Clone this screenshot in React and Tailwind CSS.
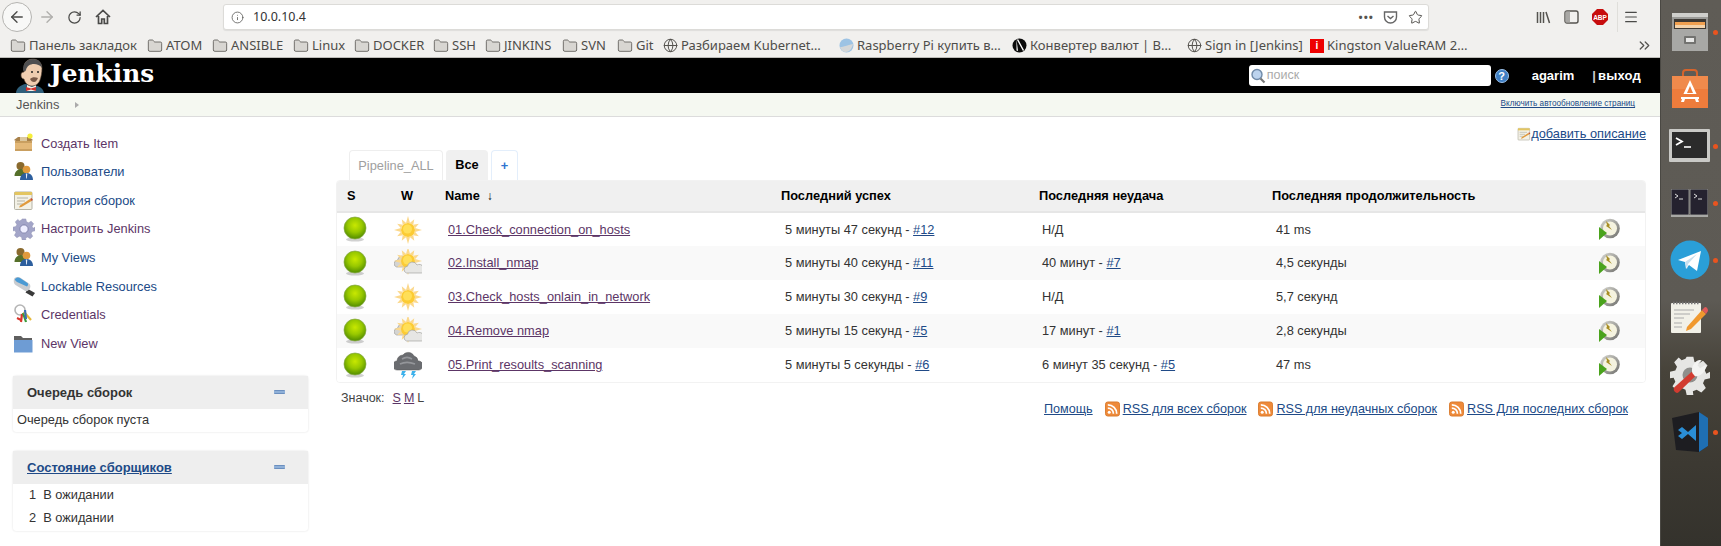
import { ArrowLeft, ArrowRight, RotateCw, Info, Star, ChevronsRight, Menu, Globe, Folder } from 'lucide-react';

const bookmarks = [
  { label: 'Панель закладок', w: 'w-[137px]' },
  { label: 'ATOM', w: 'w-[65px]' },
  { label: 'ANSIBLE', w: 'w-[81px]' },
  { label: 'Linux', w: 'w-[61px]' },
  { label: 'DOCKER', w: 'w-[79px]' },
  { label: 'SSH', w: 'w-[52px]' },
  { label: 'JINKINS', w: 'w-[77px]' },
  { label: 'SVN', w: 'w-[55px]' },
  { label: 'Git', w: 'w-[46px]' },
  { label: 'Разбираем Kubernet…', w: 'w-[176px]', icon: 'globe' },
  { label: 'Raspberry Pi купить в…', w: 'w-[173px]', icon: 'rasp' },
  { label: 'Конвертер валют | В…', w: 'w-[175px]', icon: 'n' },
  { label: 'Sign in [Jenkins]', w: 'w-[123px]', icon: 'globe' },
  { label: 'Kingston ValueRAM 2…', w: 'w-[170px]', icon: 'king' },
];

const sideItems = [
  { label: 'Создать Item', icon: BoxIcon, visited: true },
  { label: 'Пользователи', icon: UsersIcon },
  { label: 'История сборок', icon: NotepadIcon },
  { label: 'Настроить Jenkins', icon: GearIcon, visited: true },
  { label: 'My Views', icon: UsersIcon },
  { label: 'Lockable Resources', icon: UsbIcon },
  { label: 'Credentials', icon: KeysIcon, visited: true },
  { label: 'New View', icon: FolderIcon, visited: true },
];

const jobs = [
  { name: '01.Check_connection_on_hosts', w: 'sun', ok: '5 минуты 47 секунд', okN: '#12', fail: 'Н/Д', dur: '41 ms' },
  { name: '02.Install_nmap', w: 'cloud', ok: '5 минуты 40 секунд', okN: '#11', fail: '40 минут', failN: '#7', dur: '4,5 секунды' },
  { name: '03.Check_hosts_onlain_in_network', w: 'sun', ok: '5 минуты 30 секунд', okN: '#9', fail: 'Н/Д', dur: '5,7 секунд' },
  { name: '04.Remove nmap', w: 'cloud', ok: '5 минуты 15 секунд', okN: '#5', fail: '17 минут', failN: '#1', dur: '2,8 секунды' },
  { name: '05.Print_resoults_scanning', w: 'storm', ok: '5 минуты 5 секунды', okN: '#6', fail: '6 минут 35 секунд', failN: '#5', dur: '47 ms' },
];

const rssLinks = ['RSS для всех сборок', 'RSS для неудачных сборок', 'RSS Для последних сборок'];

function BoxIcon() {
  return (
    <svg width="21" height="21" viewBox="0 0 21 21">
      <path d="M1 7l4-3h11l4 3-2 1H3z" fill="#a8814a" />
      <path d="M2 8h17v10H2z" fill="#e3b878" />
      <path d="M2 8h17v2H2z" fill="#c99f60" />
      <path d="M7 4h7v4H7z" fill="#dcc8a0" />
      <path d="M2 16h17v2H2z" fill="#c99f60" />
      <circle cx="17" cy="3" r="2.600" fill="#f6ee3a" />
    </svg>
  );
}

function UsersIcon() {
  return (
    <svg width="21" height="21" viewBox="0 0 21 21">
      <circle cx="7.500" cy="5" r="4" fill="#8a6a2e" />
      <path d="M1.500 15c0-4 3-7 6.500-7s5 3 5 7z" fill="#55702a" />
      <circle cx="13.500" cy="8.500" r="3.800" fill="#e09a3c" />
      <path d="M7 19c0-4.500 3-7 6.500-7s6.500 2.500 6.500 7z" fill="#2d5f9e" />
      <path d="M12.800 12.500h1.500l-.4 5h-.7z" fill="#e8eef6" />
    </svg>
  );
}

function NotepadIcon({ size = 21 }) {
  return (
    <svg width={size} height={size} viewBox="0 0 21 21">
      <rect x="1.500" y="2" width="17.500" height="17.500" rx="1" fill="#f3f1e6" stroke="#b5b3a5" />
      <rect x="1.500" y="2" width="17.500" height="3" fill="#e3c560" />
      <path d="M4 8h11M4 11h8M4 14h6" stroke="#b5b3a5" strokeWidth="1" />
      <path d="M7 15.500l10-6.500 1.500 2-10 6-2.500.500z" fill="#e09a3c" />
      <path d="M17 9l1.500-1 1.500 2-1.500 1z" fill="#c8502e" />
    </svg>
  );
}

function GearIcon() {
  return (
    <svg width="22" height="22" viewBox="0 0 24 24">
      <path
        d="M10 1h4l.7 3.200 2.300 1 2.800-1.700 2.700 2.800-1.700 2.700 1 2.300L24 10v4l-3.200.7-1 2.300 1.700 2.800-2.700 2.700-2.800-1.700-2.300 1L14 24h-4l-.7-3.200-2.300-1-2.800 1.700-2.700-2.700 1.700-2.800-1-2.300L0 14v-4l3.200-.7 1-2.300-1.700-2.700 2.700-2.800L7 3.200l2.300-1z"
        fill="#a3a5c8"
        stroke="#8c8eb3"
        strokeWidth=".5"
      />
      <circle cx="12" cy="12" r="4.500" fill="#eef" stroke="#7d7fa8" />
    </svg>
  );
}

function UsbIcon() {
  return (
    <svg width="23" height="21" viewBox="0 0 23 21">
      <path d="M15 13l7 4-2.500 3.500-7-4z" fill="#3a3a3a" />
      <path d="M1 3c1-2 4-2.500 6-1.500l9 6c2 1.500 1.500 4 .500 5.500s-3 3-5 1.500L2.500 9C1 8 .3 5 1 3z" fill="#c9ccd0" />
      <path d="M2 3c1-1.500 3.500-2 5-1l7.500 5c1 1 .5 2.500-.5 3.500L4 6C2.800 5.200 1.500 4 2 3z" fill="#4a9ad4" />
    </svg>
  );
}

function KeysIcon() {
  return (
    <svg width="21" height="22" viewBox="0 0 21 22">
      <circle cx="7" cy="6" r="5" fill="none" stroke="#b5b5b5" strokeWidth="1.600" />
      <path d="M9 10l-1 8" stroke="#d9352b" strokeWidth="2.200" />
      <path d="M10 9l3 9" stroke="#3a9a3a" strokeWidth="2.200" />
      <path d="M11 8l7 8" stroke="#e6b93a" strokeWidth="2.200" />
      <path d="M12 6l1 9" stroke="#3a6fb5" strokeWidth="2.200" />
      <path d="M4 14l4 2" stroke="#d9352b" strokeWidth="2" />
    </svg>
  );
}

function FolderIcon() {
  return (
    <svg width="21" height="21" viewBox="0 0 21 21">
      <path d="M1 3h7l2 2h9v14H1z" fill="#5f5f5f" />
      <path d="M1 7h18.500v12.500H1z" fill="#6e9cd4" />
    </svg>
  );
}

function Ball() {
  return (
    <svg width="24" height="27" viewBox="0 0 24 27" className="block">
      <defs>
        <radialGradient id="ballFill" cx="50%" cy="38%" r="58%">
          <stop offset="0%" stopColor="#c8e800" />
          <stop offset="55%" stopColor="#98c800" />
          <stop offset="100%" stopColor="#5a9400" />
        </radialGradient>
      </defs>
      <ellipse cx="12" cy="23.500" rx="9" ry="2" fill="#000" opacity=".18" />
      <circle cx="12" cy="12" r="11" fill="url(#ballFill)" stroke="#86a848" strokeWidth=".7" />
    </svg>
  );
}

function Sun({ r = 7, cx = 14, cy = 14 }) {
  const rays = [0, 30, 60, 90, 120, 150, 180, 210, 240, 270, 300, 330];
  return (
    <g>
      {rays.map((a, i) => (
        <path
          key={a}
          transform={`rotate(${a} ${cx} ${cy})`}
          d={`M${cx - 2} ${cy - r}L${cx} ${cy - r - (i % 3 === 0 ? 7 : 5.500)}L${cx + 2} ${cy - r}z`}
          fill="#fbd88c"
        />
      ))}
      <circle cx={cx} cy={cy} r={r} fill="#fccb34" />
      <circle cx={cx - 0.500} cy={cy - 1} r={r - 2.500} fill="#ffdf58" />
    </g>
  );
}

function Cloud({ fill, x = 0, y = 0 }) {
  return (
    <path
      transform={`translate(${x} ${y})`}
      d="M3 12a3.500 3.500 0 0 1 1-6.800A5 5 0 0 1 13.500 4 4 4 0 0 1 18 12z"
      fill={fill}
      stroke="#989896"
      strokeWidth=".6"
    />
  );
}

function Weather({ kind }) {
  return (
    <svg width="28" height="28" viewBox="0 0 28 28" className="block">
      {kind === 'sun' && <Sun />}
      {kind === 'cloud' && (
        <g>
          <Cloud fill="#d4d4d2" x={-0.500} y={6} />
          <Sun r={7} cx={14} cy={12} />
          <Cloud fill="#e6e6e4" x={9.500} y={12} />
        </g>
      )}
      {kind === 'storm' && (
        <g>
          <path d="M3 19a4.500 4.500 0 0 1 0-9A6 6 0 0 1 9 4a6.500 6.500 0 0 1 11 1 5.500 5.500 0 0 1 4 5 4.500 4.500 0 0 1 1 9z" fill="#6a6c70" stroke="#555" strokeWidth=".5" />
          <path d="M8 8c3-2 7-2 10 0M6 13c4-2 10-2 15 0" stroke="#94969a" strokeWidth="1.600" fill="none" />
          <path d="M8 20h4l-2 3h2l-4 5 1-4H7z" fill="#3eb2ec" />
          <path d="M18 20h4l-2 3h2l-4 5 1-4h-2z" fill="#3eb2ec" />
        </g>
      )}
    </svg>
  );
}

function BuildIcon() {
  return (
    <svg width="22" height="23" viewBox="0 0 22 23" className="block">
      <defs>
        <linearGradient id="clockRim" x1="0" y1="0" x2="1" y2="1">
          <stop offset="0%" stopColor="#d8d8d2" />
          <stop offset="100%" stopColor="#6f6f6c" />
        </linearGradient>
      </defs>
      <circle cx="12" cy="10.500" r="9.800" fill="url(#clockRim)" />
      <circle cx="12" cy="10.500" r="7" fill="#f5f3df" />
      <path d="M8 3l4 4-1 1 3 4-6-4 1-1z" fill="#a88e24" />
      <path d="M1 9l8 6-8 7z" fill="#4aa31c" />
    </svg>
  );
}

function RssIcon() {
  return (
    <svg width="15" height="16" viewBox="0 0 16 16" className="shrink-0">
      <rect x=".5" y=".5" width="15" height="15" rx="2.500" fill="#ee8a3a" stroke="#d97a2c" />
      <circle cx="4.500" cy="11.500" r="1.600" fill="#fff" />
      <path d="M3 7a6 6 0 0 1 6 6M3 3.500A9.500 9.500 0 0 1 12.500 13" stroke="#fff" strokeWidth="1.800" fill="none" />
    </svg>
  );
}

function JenkinsLogo() {
  return (
    <svg width="30" height="35" viewBox="0 0 30 35" className="block">
      <path d="M0 35c0-5 5-8 9-9l9 1c5 1 9 3 10 8z" fill="#2f5f7a" />
      <path d="M11 27l5 2 4-2v6h-9z" fill="#f3f1e8" />
      <path d="M10 29l5 1.500 5-1.500v4l-5-1.500-5 1.500z" fill="#d0312d" />
      <path d="M8 9c0-5 4-8 9-8s9 4 9 9-1 9-2 12-4 6-8 6-7-3-8-7c-2 0-3-2-3-4s1-3 3-3z" fill="#efcdb0" stroke="#5a4636" strokeWidth=".6" />
      <path d="M7 12c0-7 4-11 10-11s9 4 9 9c-2-3-5-4-8-4-4 0-7 2-8 6-1 2-2 2-3 0z" fill="#4e4e50" />
      <path d="M14 21c2-2 5-2 8-1-1 2-2 4-4 4-2 0-3-1-4-3z" fill="#7a5a48" />
      <circle cx="16" cy="14" r="1" fill="#222" />
      <circle cx="22" cy="14" r="1" fill="#222" />
    </svg>
  );
}

function BookmarkIcon({ kind }) {
  if (kind === 'globe') return <Globe size={15} strokeWidth={1.600} className="text-[#55534f] shrink-0" />;
  if (kind === 'rasp') {
    return (
      <svg width="15" height="15" viewBox="0 0 15 15" className="shrink-0">
        <circle cx="7.500" cy="7.500" r="7" fill="#9dc3e4" />
        <path d="M1 9c4 0 7-2 13-3-1 5-4 8-7 8S2 12 1 9z" fill="#d5d7d8" />
      </svg>
    );
  }
  if (kind === 'n') {
    return (
      <svg width="15" height="15" viewBox="0 0 15 15" className="shrink-0">
        <circle cx="7.500" cy="7.500" r="7" fill="#0b0b0b" />
        <path d="M4.500 1.500L6 13l-1.500-.500zM5 2l6 11 1-1L6 1z" fill="#fff" />
      </svg>
    );
  }
  if (kind === 'king') {
    return (
      <span className="w-[14px] h-[14px] shrink-0 bg-[#ee0000] text-white text-[10px] leading-[14px] font-bold text-center font-['Liberation_Sans',sans-serif]">i</span>
    );
  }
  return <Folder size={16} strokeWidth={1.200} className="text-[#55534f] fill-[#d8d6d2] shrink-0" />;
}

function Collapse() {
  return <span className="block w-[11px] h-[4px] bg-[#8fb0d8] border-y border-[#6b8fbf] rounded-[1px]" />;
}

function DockDot({ on }) {
  if (!on) return null;
  return <span className="absolute right-[3px] top-1/2 -mt-[2px] w-[5px] h-[5px] rounded-full bg-[#e9541f]" />;
}

const dock = [
  {
    on: true,
    svg: (
      <svg width="38" height="40" viewBox="0 0 38 40">
        <rect x="1" y="1" width="36" height="38" rx="2" fill="#9b9b98" />
        <rect x="1" y="1" width="36" height="4" fill="#cfcfcc" />
        <rect x="3" y="7" width="32" height="11" fill="#3c3833" />
        <path d="M4 10h30v3H4z" fill="#f0a050" />
        <path d="M4 13h30v3H4z" fill="#f4d3aa" />
        <rect x="1" y="17" width="36" height="22" fill="#a8a8a5" />
        <rect x="13" y="24" width="12" height="8" rx="1" fill="#737370" />
        <rect x="15" y="26" width="8" height="4" fill="#e8e8e6" />
      </svg>
    ),
  },
  {
    svg: (
      <svg width="38" height="40" viewBox="0 0 38 40">
        <path d="M12 7V4a3 3 0 0 1 3-3h8a3 3 0 0 1 3 3v3" stroke="#d5642c" strokeWidth="2" fill="none" />
        <path d="M1 7h36v32H1z" fill="#ee7c3c" />
        <path d="M1 7h36L37 20H1z" fill="#f08a4c" />
        <path d="M19 11l-7 15h14z" fill="#fff" />
        <path d="M19 17l-3 7h6z" fill="#ee7c3c" />
        <rect x="10" y="25" width="18" height="2" fill="#ee7c3c" />
        <path d="M10 28h18v2H10z" fill="#fff" />
        <path d="M11 30h3l-1 3h-3zM24 30h3l1 3h-3z" fill="#fff" />
      </svg>
    ),
  },
  {
    on: true,
    svg: (
      <svg width="41" height="33" viewBox="0 0 41 33">
        <rect x="0" y="0" width="41" height="33" rx="1" fill="#c9c9c6" />
        <rect x="3" y="3" width="35" height="26" fill="#2b2b2b" />
        <path d="M7 9l6 3.500-6 3.500" stroke="#fff" strokeWidth="1.800" fill="none" />
        <path d="M15 18h7" stroke="#fff" strokeWidth="1.600" />
      </svg>
    ),
  },
  {
    on: true,
    svg: (
      <svg width="37" height="28" viewBox="0 0 37 28">
        <rect x="0" y="0" width="18" height="26" rx="1" fill="#25222f" stroke="#8f8f8c" />
        <rect x="19" y="0" width="18" height="26" rx="1" fill="#25222f" stroke="#8f8f8c" />
        <rect x="0" y="26" width="37" height="2" fill="#a8a8a5" />
        <path d="M4 5l3 2-3 2M8 10h4M23 5l3 2-3 2M27 10h4" stroke="#ddd" strokeWidth="1" fill="none" />
      </svg>
    ),
  },
  {
    on: true,
    svg: (
      <svg width="40" height="40" viewBox="0 0 40 40">
        <circle cx="20" cy="20" r="19.500" fill="#2a9fd8" />
        <path d="M8 20l23-9-4 20-8-6-3 4-1-7z" fill="#fff" />
        <path d="M15 22l12-8-9 10-1 5z" fill="#c7dfee" />
      </svg>
    ),
  },
  {
    svg: (
      <svg width="40" height="33" viewBox="0 0 40 33">
        <rect x="1" y="2" width="30" height="30" rx="1" fill="#f2f1e8" />
        <path d="M3 2h27" stroke="#777" strokeWidth="2.400" strokeDasharray="1.500 1.500" />
        <path d="M4 9h20M4 13h16M4 17h10M4 22h8M4 26h8" stroke="#aaa" strokeWidth="1" />
        <path d="M17 26l15-17 4 4-15 15-5 2z" fill="#f0992e" />
        <path d="M32 9l3-3c2 0 3 2 3 4l-2 3z" fill="#e05a5a" />
      </svg>
    ),
  },
  {
    svg: (
      <svg width="40" height="40" viewBox="0 0 24 24">
        <path
          d="M10 1h4l.7 3.200 2.300 1 2.800-1.700 2.700 2.800-1.700 2.700 1 2.300L24 10v4l-3.200.7-1 2.300 1.700 2.800-2.700 2.700-2.800-1.700-2.300 1L14 24h-4l-.7-3.200-2.300-1-2.800 1.700-2.700-2.700 1.700-2.800-1-2.300L0 14v-4l3.200-.7 1-2.300-1.700-2.700 2.700-2.800L7 3.200l2.300-1z"
          fill="#e6e6e4"
        />
        <circle cx="12" cy="12" r="4.500" fill="#8f8f8c" />
        <path d="M2.500 19.500L13 10l2.500 2.500L5 22.500c-1.500 1-3.500-1.500-2.500-3z" fill="#d23b30" />
        <path d="M13.500 11c-1-3 .5-7 4-8l1.500.2-2.500 3 1.500 1.800 3.500-2.200c.3 4-3 7-6.500 7z" fill="#f4f4f2" />
      </svg>
    ),
  },
  {
    on: true,
    svg: (
      <svg width="36" height="40" viewBox="0 0 36 40">
        <path d="M0 6l27-6 9 8v26l-9 6L4 38z" fill="#1d1d21" />
        <path d="M27 0l9 6v28l-9 6z" fill="#1f6fb3" />
        <path d="M6 18l4-3 6 5 8-7v16l-8-7-6 5-4-3 4-3z" fill="#2a8ed6" />
      </svg>
    ),
  },
];

export default function App() {
  return (
    <div className="w-[1721px] h-[546px] overflow-hidden flex font-['Liberation_Sans',Arial,sans-serif] text-[#333] bg-white">
      <div className="w-[1660px] flex flex-col shrink-0">
        {/* browser chrome */}
        <div className="h-[34px] bg-[#f1f0ee] flex items-center text-[#4a4a48]">
          <div className="ml-[2px] w-[30px] h-[30px] rounded-full bg-[#f8f8f7] border border-[#b5b4b1] flex items-center justify-center">
            <ArrowLeft size={18} strokeWidth={1.800} />
          </div>
          <ArrowRight size={18} strokeWidth={1.800} className="ml-[6px] text-[#b0afac]" />
          <RotateCw size={15} strokeWidth={2} className="ml-[11px]" />
          <svg width="16" height="16" viewBox="0 0 16 16" className="ml-[13px]">
            <path d="M1 8l7-6.500L15 8M3.500 7v7.500h3.200V10h2.600v4.500h3.200V7" fill="none" stroke="currentColor" strokeWidth="1.700" />
          </svg>
          <div className="ml-[112px] w-[1206px] h-[26px] bg-white rounded-[3px] border border-[#dcdbd8] shadow-[0_1px_1px_rgba(0,0,0,.08)] flex items-center font-['Noto_Sans',sans-serif]">
            <Info size={13} strokeWidth={1.500} className="ml-[7px] text-[#5a5a58]" />
            <span className="ml-[9px] text-[12.500px] text-[#333]">10.0.10.4</span>
            <span className="ml-auto text-[#55534f] tracking-[1px] text-[11px] font-bold">•••</span>
            <svg width="15" height="15" viewBox="0 0 15 15" className="ml-[9px]">
              <path d="M1.500 2h12v5a6 6 0 0 1-12 0z" fill="none" stroke="#666" strokeWidth="1.400" />
              <path d="M4.500 6l3 2.500 3-2.500" fill="none" stroke="#666" strokeWidth="1.400" />
            </svg>
            <Star size={15} strokeWidth={1.600} className="ml-[10px] mr-[5px] text-[#55534f]" />
          </div>
          <svg width="15" height="15" viewBox="0 0 15 15" className="ml-[107px]">
            <path d="M1.500 2v11M4.500 2v11M7.500 2v11M10 2l3.500 11" stroke="#55534f" strokeWidth="1.500" />
          </svg>
          <svg width="15" height="14" viewBox="0 0 15 14" className="ml-[13px]">
            <rect x="1" y="1" width="13" height="12" rx="2" fill="none" stroke="#55534f" strokeWidth="1.400" />
            <rect x="1.500" y="1.500" width="4.500" height="11" fill="#a9a8a5" />
          </svg>
          <svg width="16" height="16" viewBox="0 0 16 16" className="ml-[13px]">
            <path d="M5 0h6l5 5v6l-5 5H5l-5-5V5z" fill="#c70d0d" />
            <text x="8" y="10.500" fontSize="6.500" fontWeight="bold" textAnchor="middle" fill="#fff" fontFamily="Liberation Sans">ABP</text>
          </svg>
          <span className="ml-[9px] w-px h-[30px] bg-[#dfdeda]" />
          <Menu size={16} strokeWidth={1.800} className="ml-[5px]" />
        </div>
        <div className="h-[24px] bg-[#f1f0ee] border-b border-[#bdbcb8] flex items-center pl-[10px] font-['Noto_Sans',sans-serif] text-[13px] text-[#4e4d4a]">
          {bookmarks.map((b) => (
            <div key={b.label} className={`${b.w} shrink-0 flex items-center gap-[3px] whitespace-nowrap`}>
              <BookmarkIcon kind={b.icon} />
              <span>{b.label}</span>
            </div>
          ))}
          <ChevronsRight size={17} strokeWidth={1.800} className="ml-[156px] text-[#55534f]" />
        </div>

        {/* jenkins header */}
        <div className="h-[35px] bg-black flex items-center text-white overflow-hidden shrink-0">
          <div className="ml-[16px] w-[34px]">
            <JenkinsLogo />
          </div>
          <span className="font-['DejaVu_Serif',serif] font-bold text-[24.800px] leading-none -mt-[3px]">Jenkins</span>
          <div className="ml-auto w-[242px] h-[21px] bg-white rounded-[3px] flex items-center">
            <svg width="15" height="16" viewBox="0 0 15 16" className="ml-[2px]">
              <circle cx="6" cy="6.500" r="5" fill="#bcd3ee" stroke="#6f8aa8" strokeWidth="1.400" />
              <path d="M9.500 10.500l4 4" stroke="#777" strokeWidth="2.200" />
            </svg>
            <span className="ml-[1px] text-[12.500px] text-[#aaa]">поиск</span>
          </div>
          <span className="ml-[4px] w-[14px] h-[14px] rounded-full bg-[#3f7fc4] border border-[#9cc0e8] text-white text-[11px] leading-[12px] font-bold text-center">?</span>
          <span className="ml-[23px] text-[13px] font-bold">agarim</span>
          <span className="ml-[18px] text-[13px] font-bold text-[#ccc]">|</span>
          <span className="ml-[2px] mr-[19px] text-[13px] font-bold tracking-[.2px]">выход</span>
        </div>
        <div className="h-[24px] bg-[#f5f8f1] border-b border-[#dcdcdc] flex items-center text-[12.800px] text-[#555]">
          <span className="ml-[16px]">Jenkins</span>
          <span className="ml-[16px] w-0 h-0 border-y-[3px] border-y-transparent border-l-[4px] border-l-[#aaa]" />
          <a className="ml-auto mr-[25px] text-[8.200px] text-[#204a87] underline">Включить автообновление страниц</a>
        </div>

        {/* page */}
        <div className="flex-1 flex min-h-0">
          <aside className="w-[336px] shrink-0 pl-[13px] pr-[28px] pt-[12px]">
            <div className="flex flex-col">
              {sideItems.map((it) => {
                const Ico = it.icon;
                return (
                  <a key={it.label} className={`h-[28.600px] flex items-center text-[12.800px] ${it.visited ? 'text-[#5c3566]' : 'text-[#204a87]'}`}>
                    <span className="w-[28px] flex items-center">
                      <Ico />
                    </span>
                    {it.label}
                  </a>
                );
              })}
            </div>
            <div className="mt-[18px] rounded-[3px] shadow-[0_0_2px_rgba(0,0,0,.15)]">
              <div className="h-[33px] bg-[#eeeeee] flex items-center justify-between pl-[14px] pr-[23px] text-[13px] font-bold">
                Очередь сборок
                <Collapse />
              </div>
              <div className="h-[23px] pl-[4px] pb-[2px] flex items-center text-[12.800px]">Очередь сборок пуста</div>
            </div>
            <div className="mt-[19px] rounded-[3px] shadow-[0_0_2px_rgba(0,0,0,.15)]">
              <div className="h-[33px] bg-[#eeeeee] flex items-center justify-between pl-[14px] pr-[23px] text-[13px] font-bold">
                <a className="text-[#204a87] underline">Состояние сборщиков</a>
                <Collapse />
              </div>
              <div className="pb-[2px] pl-[16px] text-[12.800px]">
                <div className="h-[22.500px] flex items-center gap-[7px]"><span>1</span>В ожидании</div>
                <div className="h-[22.500px] flex items-center gap-[7px]"><span>2</span>В ожидании</div>
              </div>
            </div>
          </aside>

          <main className="w-[1310px] shrink-0 flex flex-col">
            <div className="h-[33px] flex items-center justify-end">
              <NotepadIcon size={14} />
              <a className="text-[12.800px] text-[#204a87] underline">добавить описание</a>
            </div>
            <div className="h-[30px] flex items-end pl-[13px] gap-[3px] text-[12.800px]">
              <div className="h-[30px] w-[94px] flex items-center justify-center border border-b-0 border-[#eeeeee] rounded-t-[4px] text-[#a0a0a0]">Pipeline_ALL</div>
              <div className="h-[30px] w-[42px] flex items-center justify-center bg-[#f0f0f0] rounded-t-[4px] font-bold text-black">Все</div>
              <div className="h-[30px] w-[27px] flex items-center justify-center border border-b-0 border-[#e3eefb] rounded-t-[4px] font-bold text-[#2f74d0]">+</div>
            </div>
            <div className="rounded-[4px] border border-[#f2f2f2] overflow-hidden">
              <table className="w-full table-fixed border-collapse text-[12.800px]">
                <colgroup>
                  <col className="w-[47px]" />
                  <col className="w-[57px]" />
                  <col className="w-[337px]" />
                  <col className="w-[258px]" />
                  <col className="w-[233px]" />
                  <col />
                  <col className="w-[47px]" />
                </colgroup>
                <thead>
                  <tr className="h-[31px] bg-[#f0f0f0] border-b-2 border-[#e6e6e6] text-left text-black">
                    <th className="pl-[10px] font-bold">S</th>
                    <th className="pl-[17px] font-bold">W</th>
                    <th className="pl-[4px] font-bold">Name<span className="ml-[7px] font-normal text-[12px]">↓</span></th>
                    <th className="pl-[3px] font-bold">Последний успех</th>
                    <th className="pl-[3px] font-bold">Последняя неудача</th>
                    <th className="pl-[3px] font-bold whitespace-nowrap">Последняя продолжительность</th>
                    <th />
                  </tr>
                </thead>
                <tbody>
                  {jobs.map((j, i) => (
                    <tr key={j.name} className={`h-[34px] ${i % 2 === 1 ? 'bg-[#f9f9f9]' : 'bg-white'}`}>
                      <td className="pl-[6px]"><Ball /></td>
                      <td className="pl-[10px]"><Weather kind={j.w} /></td>
                      <td className="pl-[7px]"><a className="text-[#5c3566] underline">{j.name}</a></td>
                      <td className="pl-[7px]">{j.ok} - <a className="text-[#204a87] underline">{j.okN}</a></td>
                      <td className="pl-[6px]">
                        {j.fail}
                        {j.failN && <> - <a className="text-[#204a87] underline">{j.failN}</a></>}
                      </td>
                      <td className="pl-[7px]">{j.dur}</td>
                      <td><BuildIcon /></td>
                    </tr>
                  ))}
                </tbody>
              </table>
            </div>
            <div className="mt-[6px] flex items-start justify-between pl-[5px] pr-[18px]">
              <div className="text-[12.500px] text-[#444]">
                Значок:
                <a className="ml-[8px] text-[#5c3566] underline">S</a>
                <a className="ml-[3px] text-[#5c3566] underline">M</a>
                <span className="ml-[3px]">L</span>
              </div>
              <div className="mt-[11px] flex items-center text-[12.600px] text-[#204a87]">
                <a className="underline">Помощь</a>
                {rssLinks.map((label) => (
                  <div key={label} className="ml-[12px] flex items-center gap-[3px]">
                    <RssIcon />
                    <a className="underline">{label}</a>
                  </div>
                ))}
              </div>
            </div>
          </main>
        </div>
      </div>

      <div className="w-[61px] shrink-0 bg-[linear-gradient(180deg,#5f5c56_0%,#5d5a54_55%,#47433a_68%,#3c3932_85%,#34322c_100%)] flex flex-col pt-[3px] border-l border-[#4a4843]">
        {dock.map((d, i) => (
          <div key={i} className="relative h-[57.200px] flex items-center justify-center pr-[3px] shrink-0">
            {d.svg}
            <DockDot on={d.on} />
          </div>
        ))}
      </div>
    </div>
  );
}
